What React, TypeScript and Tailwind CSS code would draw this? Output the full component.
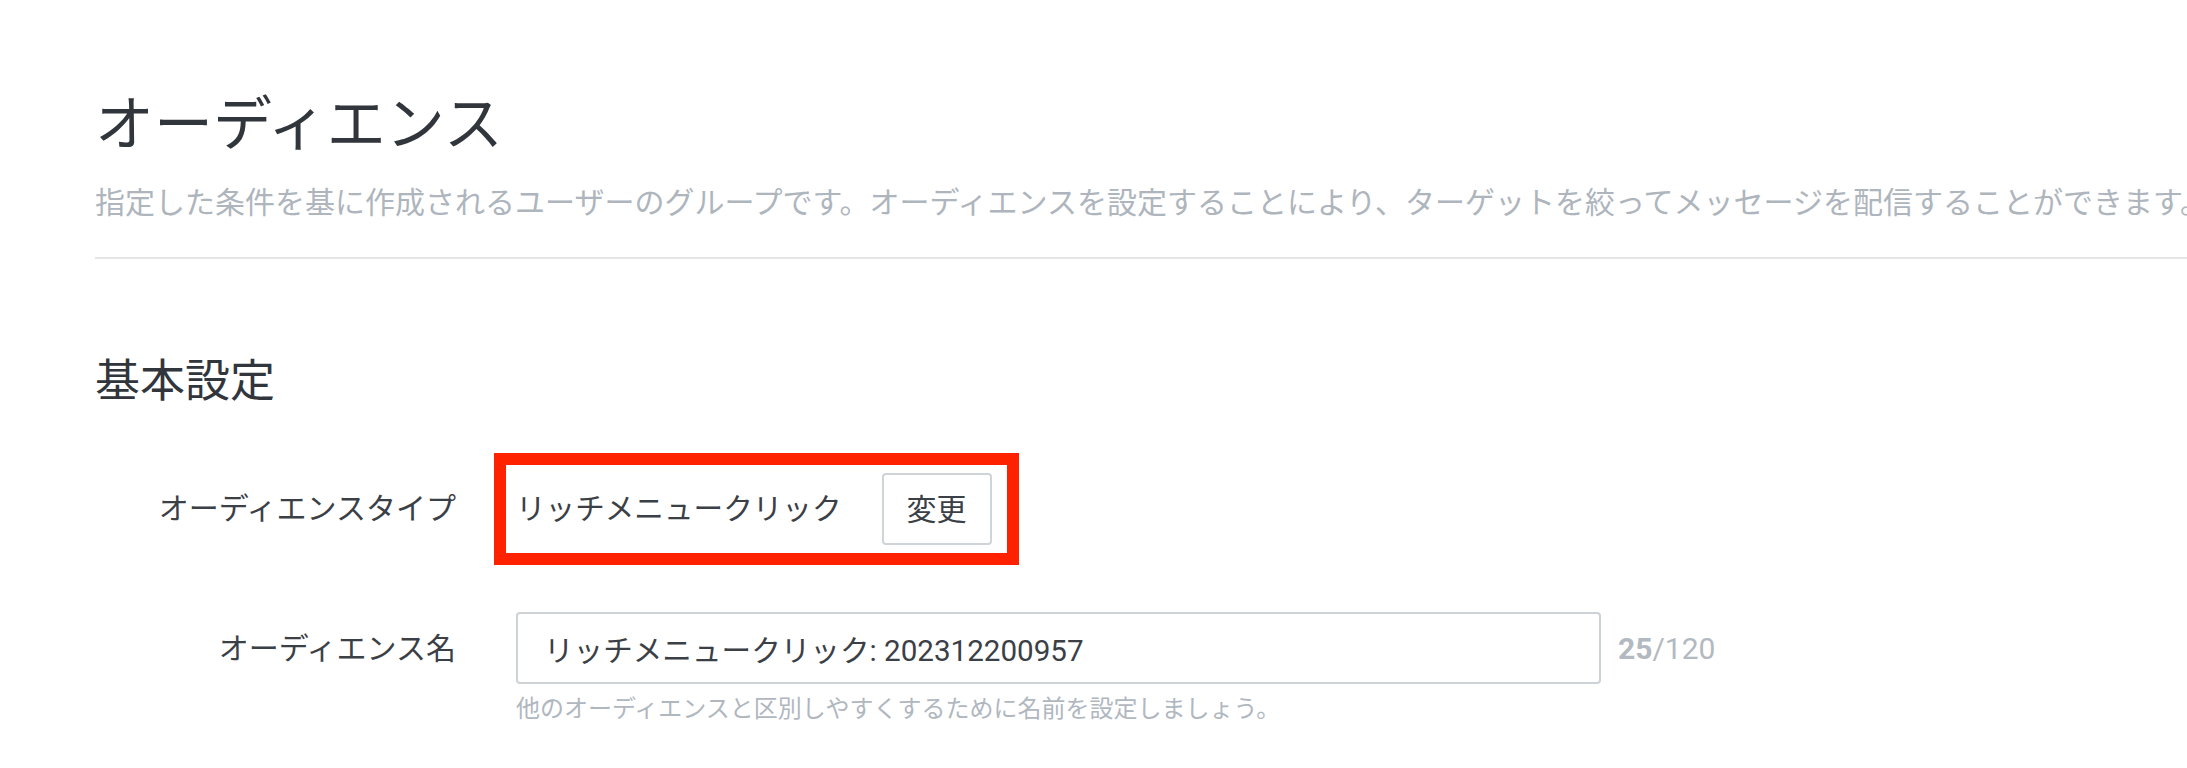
import React from 'react';

const font = { fontFamily: 'Roboto, "Noto Sans CJK JP", sans-serif' };

const App: React.FC = () => {
  const name = 'リッチメニュークリック: 202312200957';

  return (
    <div className="min-h-screen w-full overflow-hidden bg-white pl-[95px] pt-[90px]" style={font}>
      {/* Header */}
      <h1 className="text-[59px] leading-[70px] font-normal text-[#31363c]">オーディエンス</h1>
      <p className="mt-[23px] whitespace-nowrap text-[30px] leading-[40px] text-[#aeb5bd]">
        指定した条件を基に作成されるユーザーのグループです。オーディエンスを設定することにより、ターゲットを絞ってメッセージを配信することができます。
      </p>
      <div className="mt-[34px] h-[2px] bg-[#e4e5e7]"></div>

      {/* Basic settings */}
      <h2 className="mt-[93px] text-[45px] leading-[60px] font-normal text-[#31363c]">基本設定</h2>

      <div className="mt-[41px] flex items-center">
        <div className="w-[361px] text-right text-[30px] leading-[40px] text-[#3b4046]">オーディエンスタイプ</div>
        <div className="ml-[38px] flex items-center border-[12px] border-[#ff2200] py-[8px] pl-[10px] pr-[15px]">
          <span className="text-[29.6px] leading-[40px] text-[#3b4046]">リッチメニュークリック</span>
          <button className="ml-[40px] flex h-[72px] w-[110px] items-center justify-center rounded-[4px] border-2 border-[#cfd4d9] bg-white text-[30px] text-[#3b4046]">
            変更
          </button>
        </div>
      </div>

      <div className="mt-[47px] flex items-start">
        <div className="flex h-[72px] w-[361px] items-center justify-end text-[30px] text-[#3b4046]">オーディエンス名</div>
        <div className="ml-[60px] flex flex-col">
          <div className="flex items-center">
            <input
              readOnly
              value={name}
              className="h-[72px] w-[1085px] rounded-[4px] border-2 border-[#cdd2d7] px-[26px] text-[29.6px] text-[#3b4046] outline-none"
              style={font}
            />
            <span className="ml-[17px] text-[30px] text-[#b3b9c0]">
              <span className="font-bold">25</span>/120
            </span>
          </div>
          <p className="mt-[8px] text-[24px] leading-[34px] text-[#b0b7bf]">
            他のオーディエンスと区別しやすくするために名前を設定しましょう。
          </p>
        </div>
      </div>
    </div>
  );
};

export default App;
